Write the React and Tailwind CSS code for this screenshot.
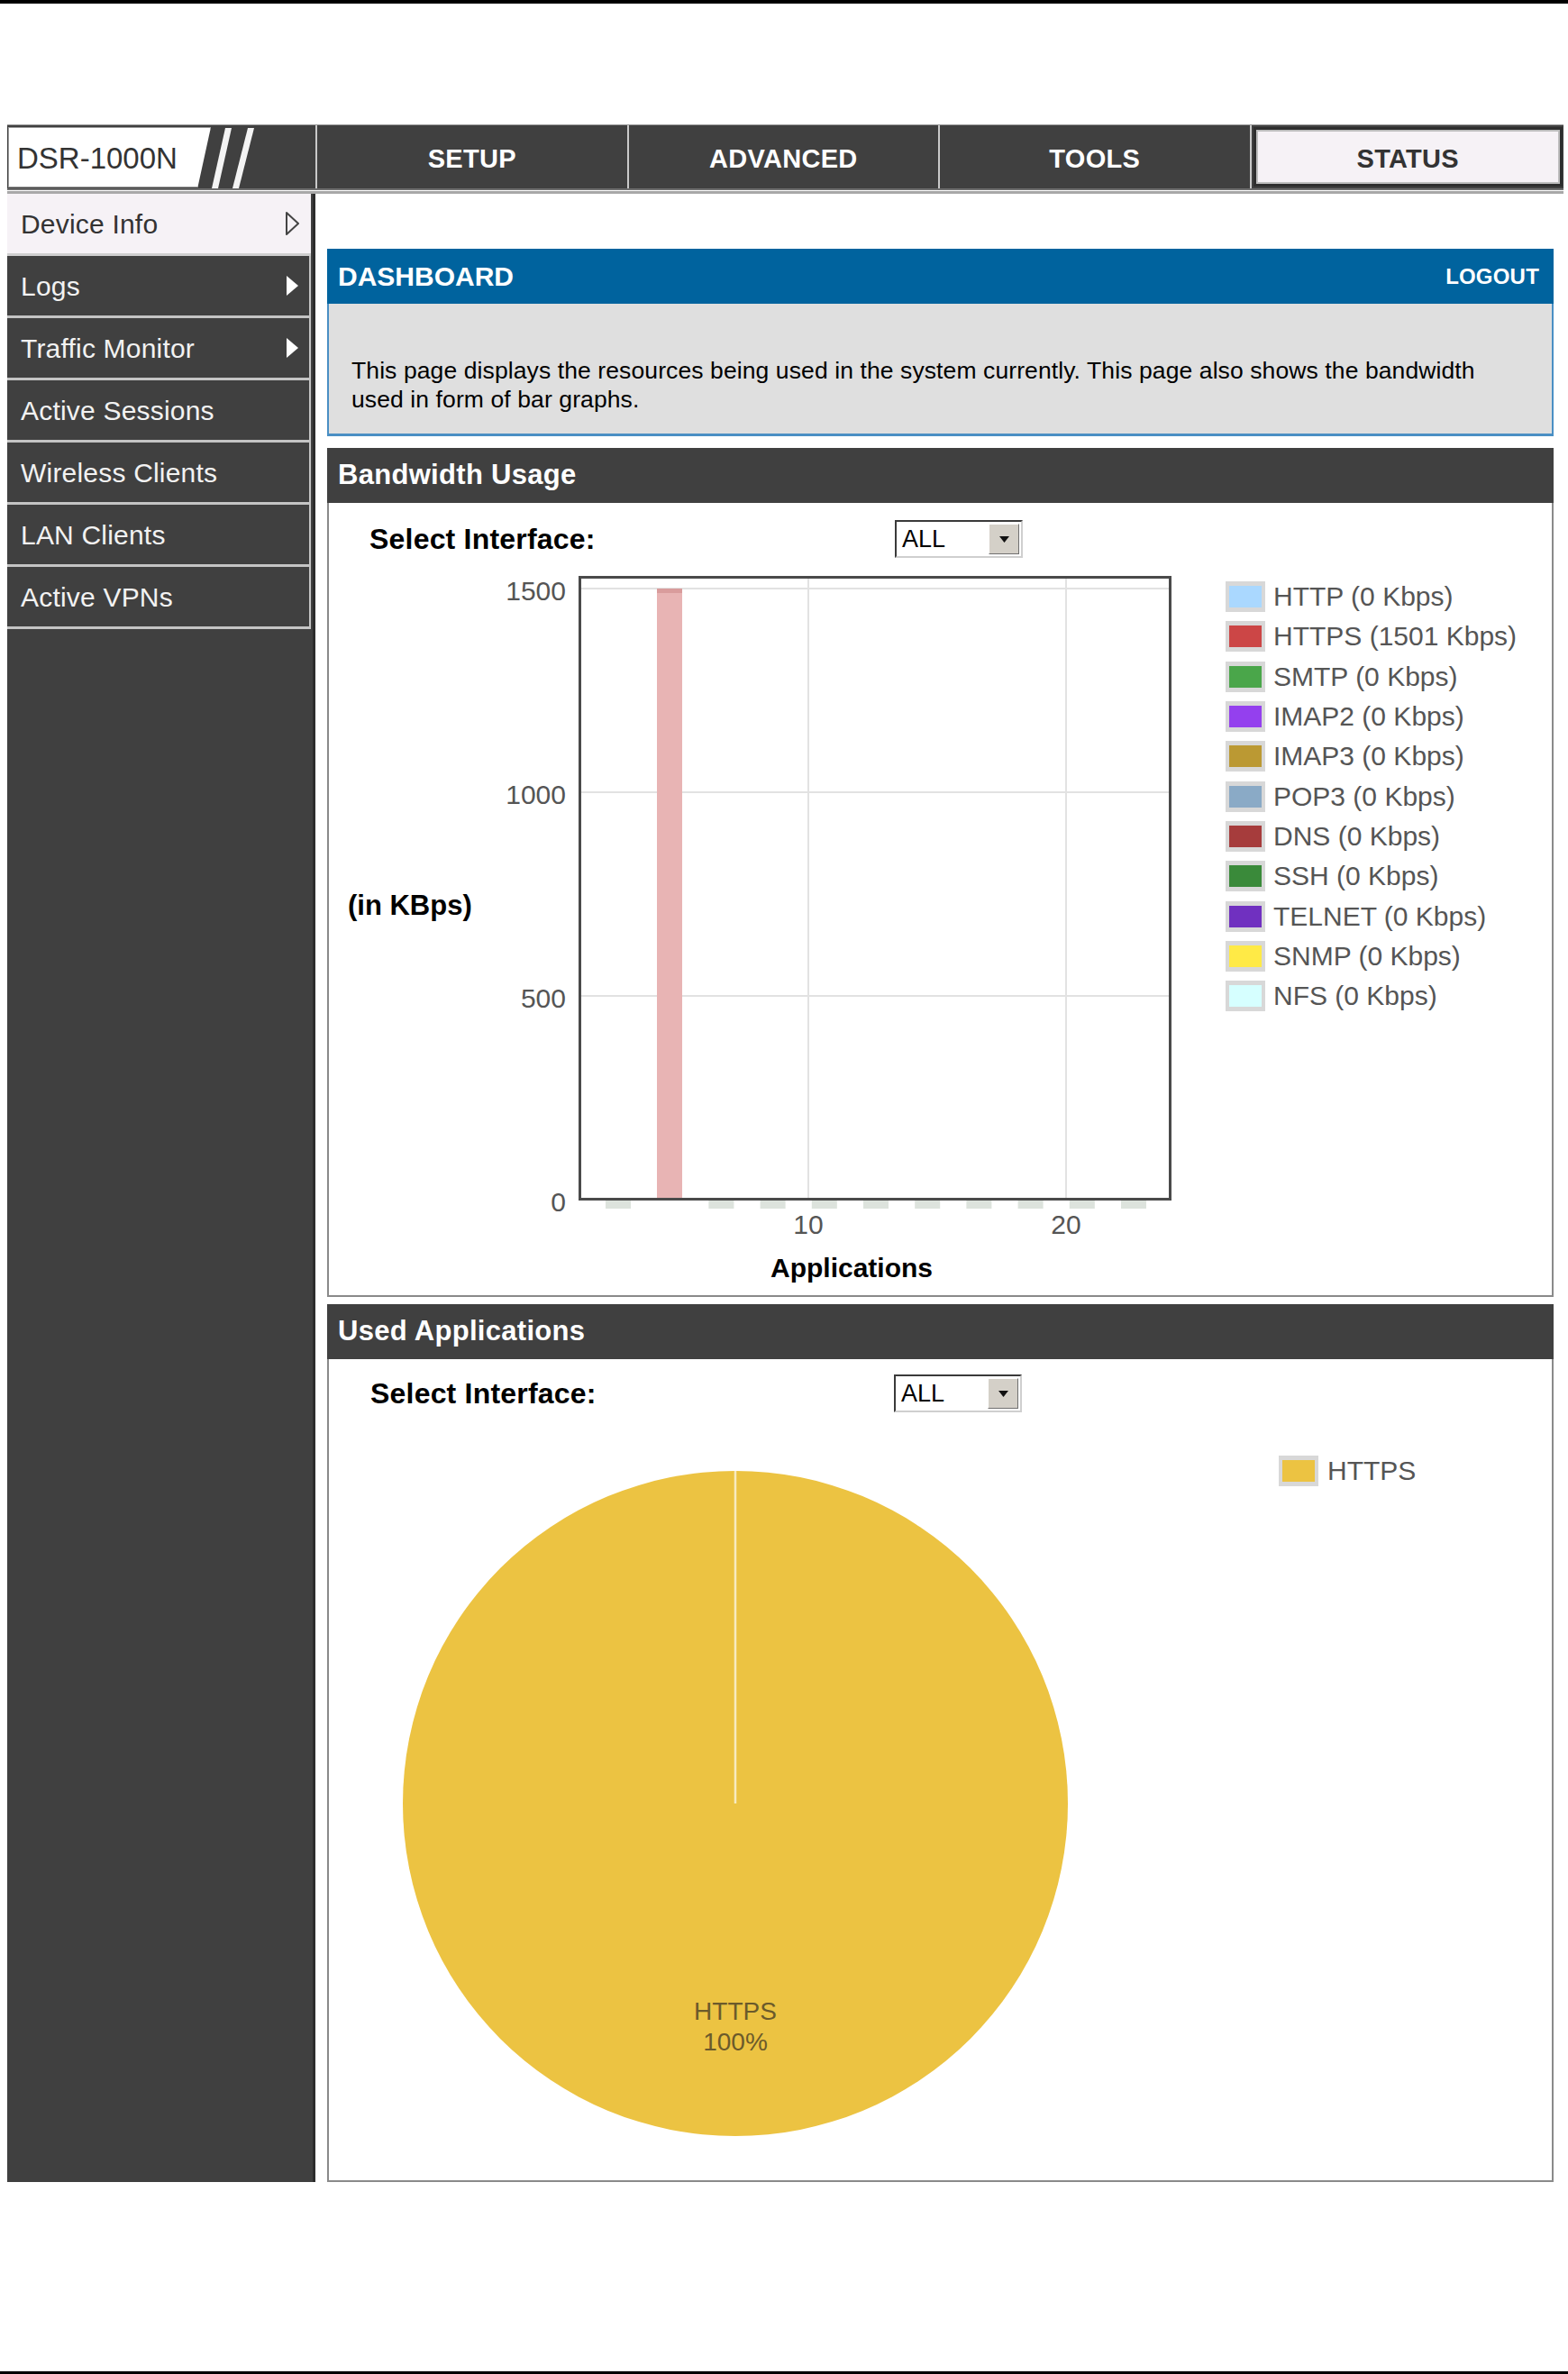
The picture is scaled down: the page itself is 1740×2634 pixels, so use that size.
import React from 'react'

const menu = [
  { label: 'Device Info', active: true, arrow: 'outline' },
  { label: 'Logs', arrow: 'solid' },
  { label: 'Traffic Monitor', arrow: 'solid' },
  { label: 'Active Sessions' },
  { label: 'Wireless Clients' },
  { label: 'LAN Clients' },
  { label: 'Active VPNs' },
]

const tabs = ['SETUP', 'ADVANCED', 'TOOLS']

const bwLegend = [
  ['HTTP (0 Kbps)', 'bg-[#aad8ff]'],
  ['HTTPS (1501 Kbps)', 'bg-[#cc4646]'],
  ['SMTP (0 Kbps)', 'bg-[#4aa64a]'],
  ['IMAP2 (0 Kbps)', 'bg-[#9440ee]'],
  ['IMAP3 (0 Kbps)', 'bg-[#bb9933]'],
  ['POP3 (0 Kbps)', 'bg-[#8aaac6]'],
  ['DNS (0 Kbps)', 'bg-[#a63c3c]'],
  ['SSH (0 Kbps)', 'bg-[#3a8a3a]'],
  ['TELNET (0 Kbps)', 'bg-[#7030c0]'],
  ['SNMP (0 Kbps)', 'bg-[#ffea46]'],
  ['NFS (0 Kbps)', 'bg-[#d6ffff]'],
]

function Swatch({ color }) {
  return (
    <span className="w-[44px] h-[34px] border-x-4 border-y-[5px] border-[#d8d8d8] flex-shrink-0">
      <span className={`block w-full h-full ${color}`} />
    </span>
  )
}

function Select() {
  return (
    <div className="w-[142px] h-[42px] flex bg-white border-2 border-t-[#3a3a3a] border-l-[#3a3a3a] border-b-[#cfcfcf] border-r-[#cfcfcf]">
      <span className="flex-1 flex items-center pl-[6px] text-[27px] text-black leading-none">ALL</span>
      <span className="w-[34px] my-[2px] mr-[2px] bg-[#d4d0c8] border border-t-white border-l-white border-b-[#6f6f6f] border-r-[#6f6f6f] flex items-center justify-center">
        <svg width="11" height="7" viewBox="0 0 11 7">
          <path d="M0 0h11L5.5 7z" fill="#111" />
        </svg>
      </span>
    </div>
  )
}

function SectionHeader({ children }) {
  return (
    <div className="h-[61px] bg-[#404040] flex items-center px-[12px] text-white font-bold text-[31px] tracking-[0.3px]">
      {children}
    </div>
  )
}

function BarChart() {
  const grid = [
    { v: '1500', y: 36 },
    { v: '1000', y: 262 },
    { v: '500', y: 488 },
    { v: '0', y: 714 },
  ]
  const slots = Array.from({ length: 11 }, (_, i) => 321 + 57.2 * i)
  const font = 'Liberation Sans, Arial, sans-serif'
  return (
    <svg width="975" height="820" viewBox="0 0 975 820" className="flex-shrink-0">
      <rect x="278.5" y="23.5" width="655" height="690" fill="#fff" />
      {grid.slice(0, 3).map((g) => (
        <line key={g.v} x1="280" x2="932" y1={g.y} y2={g.y} stroke="#e2e2e2" strokeWidth="2" />
      ))}
      <line x1="532" x2="532" y1="25" y2="712" stroke="#e2e2e2" strokeWidth="2" />
      <line x1="818" x2="818" y1="25" y2="712" stroke="#e2e2e2" strokeWidth="2" />
      <rect x="364" y="36" width="28" height="678" fill="#e8b4b4" />
      <rect x="364" y="36" width="28" height="5" fill="#d99c9c" />
      {slots.map((x, i) =>
        i === 1 ? null : <rect key={i} x={x - 14} y="715" width="28" height="9" fill="#dde3dd" />
      )}
      <rect x="278.5" y="23.5" width="655" height="690" fill="none" stroke="#4a4a4a" strokeWidth="3" />
      {grid.map((g) => (
        <text key={g.v} x="263" y={g.y + 13} textAnchor="end" fontSize="30" fill="#555" fontFamily={font}>
          {g.v}
        </text>
      ))}
      <text x="532" y="752" textAnchor="middle" fontSize="30" fill="#555" fontFamily={font}>
        10
      </text>
      <text x="818" y="752" textAnchor="middle" fontSize="30" fill="#555" fontFamily={font}>
        20
      </text>
      <text x="21" y="398" fontSize="31" fontWeight="bold" fill="#000" fontFamily={font}>
        (in KBps)
      </text>
      <text x="580" y="800" textAnchor="middle" fontSize="30" fontWeight="bold" fill="#000" fontFamily={font}>
        Applications
      </text>
    </svg>
  )
}

function PieChart() {
  const font = 'Liberation Sans, Arial, sans-serif'
  return (
    <svg width="1035" height="851" viewBox="0 0 1035 851" className="flex-shrink-0">
      <circle cx="451" cy="433" r="369" fill="#ecc342" />
      <line x1="451" x2="451" y1="64" y2="433" stroke="#f7ebc0" strokeWidth="2.5" />
      <text x="451" y="673" textAnchor="middle" fontSize="28" fill="#6b5a2b" fontFamily={font}>
        HTTPS
      </text>
      <text x="451" y="707" textAnchor="middle" fontSize="28" fill="#6b5a2b" fontFamily={font}>
        100%
      </text>
    </svg>
  )
}

function Nav() {
  return (
    <div className="ml-[8px] w-[1727px] h-[77px] flex flex-col flex-shrink-0">
      <div className="h-[71px] flex bg-[#404040] border-t border-[#9a9a9a]">
        <div className="w-[342px] flex items-start pt-[2px]">
          <div className="ml-[1px] w-[225px] h-[67px] bg-white border border-[#9a9a9a] [clip-path:polygon(0_0,100%_0,93.5%_100%,0_100%)] flex items-center pl-[9px] pt-[2px] text-[33px] text-[#333]">
            DSR-1000N
          </div>
          <svg width="60" height="70" viewBox="0 0 60 70" className="-mt-[2px]">
            <polygon points="16,3 23,3 8,70 1,70" fill="#f4f4f4" />
            <polygon points="41,3 48,3 31,70 24,70" fill="#f4f4f4" />
          </svg>
        </div>
        {tabs.map((t) => (
          <div
            key={t}
            className="flex-1 border-l-2 border-[#c9c9c9] flex items-center justify-center pt-[5px] text-white font-bold text-[29px] tracking-[0.3px]"
          >
            {t}
          </div>
        ))}
        <div className="flex-1 border-l-2 border-[#c9c9c9] py-[2px] pl-[2px] pr-[1px]">
          <div className="h-full border-[3px] border-[#2e2e2e] bg-[#f6f2f6] shadow-[inset_0_0_0_2px_#bdbdbd] flex items-center justify-center pt-[5px] text-[#333] font-bold text-[29px] tracking-[0.3px]">
            STATUS
          </div>
        </div>
      </div>
      <div className="h-[2px] bg-[#6e6e6e]" />
      <div className="h-px bg-white" />
      <div className="h-[3px] bg-[#a8a8a8]" />
    </div>
  )
}

function Sidebar() {
  return (
    <aside className="ml-[8px] w-[342px] bg-[#404040] border-r-[3px] border-[#2c2c2c] pr-[2px] flex flex-col flex-shrink-0">
      {menu.map((m) => (
        <div
          key={m.label}
          className={`h-[69px] flex items-center justify-between pl-[15px] pr-[12px] text-[30px] tracking-[0.2px] border-b-[3px] ${
            m.active
              ? 'bg-[#f6f2f6] text-[#333] border-[#cfcfcf]'
              : 'text-[#f2f2f2] border-[#c4c4c4] border-r-2'
          }`}
        >
          <span>{m.label}</span>
          {m.arrow === 'outline' && (
            <svg width="17" height="28" viewBox="0 0 17 28">
              <path d="M2 2 L15 14 L2 26 Z" fill="none" stroke="#444" strokeWidth="2" strokeLinejoin="round" />
            </svg>
          )}
          {m.arrow === 'solid' && (
            <svg width="13" height="22" viewBox="0 0 13 22">
              <path d="M0 0 L13 11 L0 22 Z" fill="#fff" />
            </svg>
          )}
        </div>
      ))}
    </aside>
  )
}

export default function App() {
  return (
    <div className="w-[1740px] h-[2634px] bg-white flex flex-col font-['Liberation_Sans',Arial,sans-serif] overflow-hidden">
      <div className="h-[4px] bg-black flex-shrink-0" />
      <div className="h-[134px] flex-shrink-0" />
      <Nav />

      <div className="flex flex-shrink-0">
        <Sidebar />

        <main className="ml-[13px] w-[1361px] flex flex-col">
          {/* dashboard intro */}
          <div className="mt-[61px] h-[61px] bg-[#00639e] flex items-center justify-between pl-[12px] pr-[16px] text-white font-bold">
            <span className="text-[30px]">DASHBOARD</span>
            <span className="text-[24px] tracking-[0.2px]">LOGOUT</span>
          </div>
          <div className="h-[147px] bg-[#dfdfdf] border-x-2 border-b-[3px] border-[#4a8fc4] pl-[25px] pr-[10px] pt-[58px] text-[26.5px] tracking-[0.1px] leading-[32px] text-black whitespace-nowrap">
            This page displays the resources being used in the system currently. This page also shows the bandwidth
            <br />
            used in form of bar graphs.
          </div>

          {/* bandwidth usage */}
          <div className="mt-[13px]">
            <SectionHeader>Bandwidth Usage</SectionHeader>
            <div className="border-x-2 border-b-2 border-[#8a8a8a] bg-white">
              <div className="h-[59px] flex items-start pt-[19px] pl-[45px]">
                <span className="w-[583px] h-[42px] flex items-center text-[32px] font-bold text-black tracking-[0.2px]">
                  Select Interface:
                </span>
                <Select />
              </div>
              <div className="flex">
                <BarChart />
                <div className="pl-[20px] pt-[23px] flex flex-col">
                  {bwLegend.map(([label, color]) => (
                    <div key={label} className="h-[44.3px] flex items-center gap-[9px]">
                      <Swatch color={color} />
                      <span className="text-[30px] text-[#555] leading-none">{label}</span>
                    </div>
                  ))}
                </div>
              </div>
            </div>
          </div>

          {/* used applications */}
          <div className="mt-[8px]">
            <SectionHeader>Used Applications</SectionHeader>
            <div className="border-x-2 border-b-2 border-[#8a8a8a] bg-white">
              <div className="h-[60px] flex items-start pt-[17px] pl-[46px]">
                <span className="w-[581px] h-[42px] flex items-center text-[32px] font-bold text-black tracking-[0.2px]">
                  Select Interface:
                </span>
                <Select />
              </div>
              <div className="flex">
                <PieChart />
                <div className="pl-[19px] pt-[46px]">
                  <div className="h-[35px] flex items-center gap-[10px]">
                    <Swatch color="bg-[#ecc342]" />
                    <span className="text-[30px] text-[#555] leading-none">HTTPS</span>
                  </div>
                </div>
              </div>
            </div>
          </div>
        </main>
      </div>

      <div className="flex-1" />
      <div className="h-[3px] bg-black flex-shrink-0" />
    </div>
  )
}
